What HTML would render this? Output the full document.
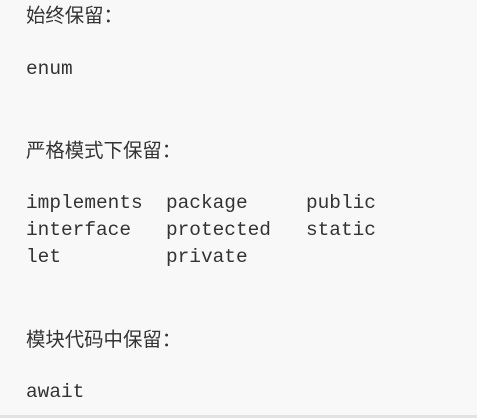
<!DOCTYPE html>
<html><head><meta charset="utf-8"><style>
html,body{margin:0;padding:0;width:477px;height:418px;background:#f8f8f8;overflow:hidden;position:relative}
.l{position:absolute;left:26px;height:27px;line-height:27px;white-space:pre;color:#333}
.c{font-family:"Noto Sans CJK SC",sans-serif;font-size:19.4px}
.m{font-family:"Liberation Mono",monospace;font-size:19.44px}
.b{position:absolute;left:0;right:0;top:415px;height:3px;background:#e3e3e3}
</style></head><body>
<div class="l c" style="top:0px">始终保留：</div>
<div class="l m" style="top:56px">enum</div>
<div class="l c" style="top:135px">严格模式下保留：</div>
<div class="l m" style="top:190px">implements  package     public</div>
<div class="l m" style="top:217px">interface   protected   static</div>
<div class="l m" style="top:244px">let         private</div>
<div class="l c" style="top:324px">模块代码中保留：</div>
<div class="l m" style="top:379px">await</div>
<div class="b"></div>
</body></html>
